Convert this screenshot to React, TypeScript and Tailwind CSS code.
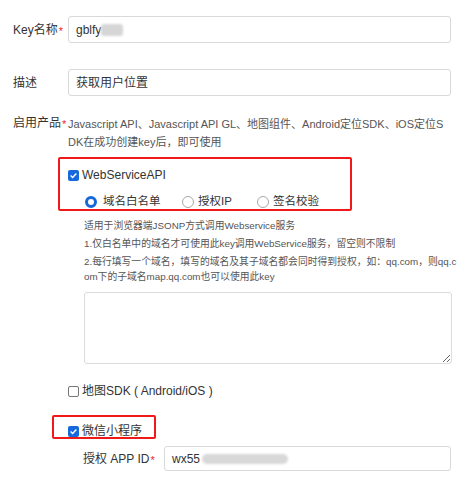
import React from 'react';

const Req = () => <sup className="text-[#f5222d] text-[11px] ml-[1px] relative top-[1px]">*</sup>;

const Check = ({ on }: { on?: boolean }) =>
  on ? (
    <span className="w-[11px] h-[11px] rounded-[2px] bg-[#1668dc] flex items-center justify-center shrink-0">
      <svg width="9" height="9" viewBox="0 0 9 9">
        <path d="M1.6 4.6 L3.6 6.5 L7.4 2.4" fill="none" stroke="#fff" strokeWidth="1.4" />
      </svg>
    </span>
  ) : (
    <span className="w-[11px] h-[11px] rounded-[2px] border border-[#767676] bg-white shrink-0" />
  );

const Radio = ({ on }: { on?: boolean }) =>
  on ? (
    <span className="block w-[12px] h-[12px] rounded-full border-[3px] border-[#1668dc] bg-white shrink-0" />
  ) : (
    <span className="block w-[12px] h-[12px] rounded-full border border-[#a8a8a8] bg-white shrink-0" />
  );

export default function App() {
  return (
    <div className="w-[463px] h-[487px] bg-white pl-[13px] pt-[16px] text-[#333] text-[12px] font-['Liberation_Sans','Noto_Sans_CJK_SC',sans-serif] overflow-hidden">
      <div className="flex items-center">
        <div className="w-[55px]">Key名称<Req /></div>
        <div className="w-[383px] h-[27px] border border-[#d9d9d9] rounded-[3px] pl-[7px] flex items-center">
          gblfy
          <span className="inline-block w-[22px] h-[12px] rounded-[3px] bg-[#d6d6d6] blur-[1px]" />
        </div>
      </div>

      <div className="flex items-center mt-[26px]">
        <div className="w-[55px]">描述</div>
        <div className="w-[383px] h-[27px] border border-[#d9d9d9] rounded-[3px] pl-[7px] flex items-center">
          获取用户位置
        </div>
      </div>

      <div className="flex mt-[19px]">
        <div className="w-[55px] leading-[16px]">启用产品<Req /></div>
        <div className="w-[382px] text-[11px] leading-[18px] text-[#555] break-all">
          Javascript API、Javascript API GL、地图组件、Android定位SDK、iOS定位SDK在成功创建key后，即可使用
        </div>
      </div>

      <div className="ml-[55px]">
        <div className="relative">
          <div className="absolute left-[-10px] top-[-9px] w-[294px] h-[54px] border-[2px] border-[#f01818] rounded-[2px]" />
          <div className="flex items-center gap-[3px] h-[18px] mt-[15px]">
            <Check on />
            <span>WebServiceAPI</span>
          </div>
          <div className="flex items-center h-[18px] mt-[9px] pl-[17px]">
            <label className="flex items-center gap-[6px] w-[97px]">
              <Radio on />
              <span className="text-[11.5px]">域名白名单</span>
            </label>
            <label className="flex items-center gap-[4px] w-[75px]">
              <Radio />
              <span className="text-[11.5px]">授权IP</span>
            </label>
            <label className="flex items-center gap-[4px]">
              <Radio />
              <span className="text-[11.5px]">签名校验</span>
            </label>
          </div>
        </div>

        <div className="ml-[16px] mt-[7px] w-[375px] text-[9.8px] leading-[15px] text-[#555] break-all">
          <p className="mb-[3px]">适用于浏览器端JSONP方式调用Webservice服务</p>
          <p className="mb-[3px]">1.仅白名单中的域名才可使用此key调用WebService服务，留空则不限制</p>
          <p>2.每行填写一个域名，填写的域名及其子域名都会同时得到授权，如：qq.com，则qq.com下的子域名map.qq.com也可以使用此key</p>
        </div>

        <textarea className="block ml-[16px] mt-[8px] w-[368px] h-[72px] border border-[#dcdcdc] rounded-[3px] resize-y outline-none" />

        <div className="flex items-center gap-[3px] h-[18px] mt-[18px]">
          <Check />
          <span>地图SDK ( Android/iOS )</span>
        </div>

        <div className="relative mt-[22px]">
          <div className="absolute left-[-16px] top-[-7px] w-[104px] h-[24px] border-[2px] border-[#f01818] rounded-[2px]" />
          <div className="flex items-center gap-[3px] h-[18px]">
            <Check on />
            <span>微信小程序</span>
          </div>
        </div>

        <div className="flex items-center mt-[6px] ml-[15px]">
          <div className="w-[81px]">授权 APP ID<Req /></div>
          <div className="w-[287px] h-[25px] border border-[#d9d9d9] rounded-[3px] pl-[7px] flex items-center">
            wx55
            <span className="inline-block ml-[2px] w-[86px] h-[10px] rounded-full bg-[#d8d8d8] blur-[1px]" />
          </div>
        </div>
      </div>
    </div>
  );
}
